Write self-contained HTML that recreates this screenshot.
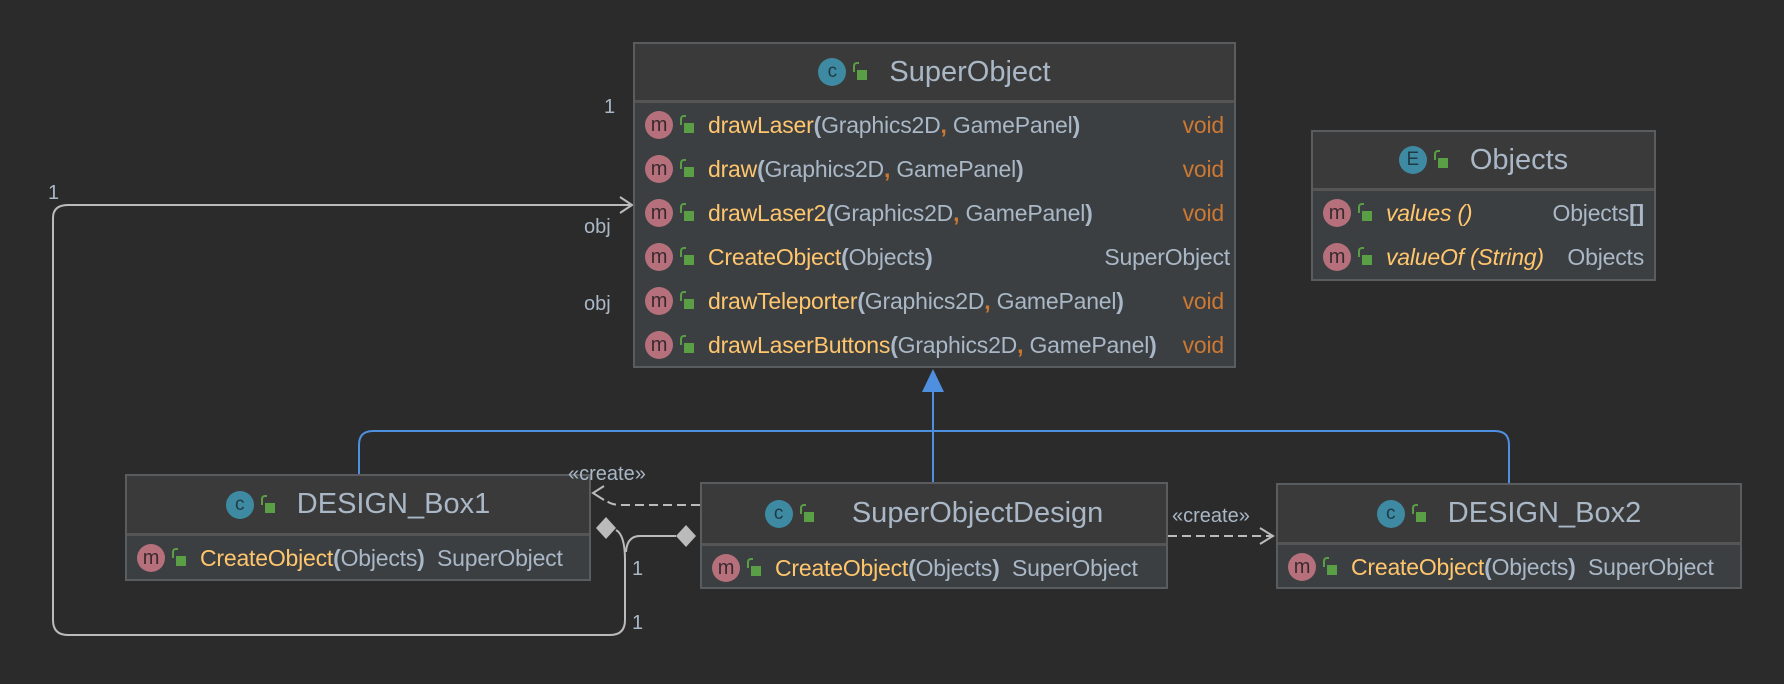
<!DOCTYPE html><html><head><meta charset="utf-8"><style>
*{margin:0;padding:0;box-sizing:border-box}
body{width:1784px;height:684px;background:#2b2b2b;position:relative;overflow:hidden;font-family:"Liberation Sans",sans-serif;color:#a9b7c6}
.box{position:absolute;border:2px solid #5a5d5f;background:#3c3f41}
.hd{background:#3a3a3a;border-bottom:3px solid #555;display:flex;align-items:center;justify-content:center;font-size:29px;color:#a9b7c6}
.row{display:flex;align-items:center;height:44px;font-size:23px;padding-left:10px;white-space:nowrap;letter-spacing:-0.2px}
.m{width:28px;height:28px;border-radius:50%;background:#b5707c;color:#3a2a2e;font-size:20px;display:inline-flex;align-items:center;justify-content:center;flex:none;line-height:1}
.c{width:28px;height:28px;border-radius:50%;background:#3f8aa3;color:#1f3a44;font-size:19px;display:inline-flex;align-items:center;justify-content:center;flex:none}
.lk{display:inline-block;width:10px;height:10px;background:#5a9e45;position:relative;margin:6px 14px 0 11px;flex:none}
.lk:before{content:"";position:absolute;left:-4px;top:-8px;width:4px;height:8px;border:2px solid #5a9e45;border-right:none;border-bottom:none;border-radius:4px 0 0 0}
.n{color:#ffc66d}.o{color:#cc7832;font-weight:bold}.b{font-weight:bold}.r{margin-left:auto;padding-right:10px}
.lb{position:absolute;font-size:20px;color:#a9b7c6}
</style></head><body>
<svg width="1784" height="684" style="position:absolute;left:0;top:0">
<g fill="none" stroke="#4f8fe0" stroke-width="2">
<path d="M359 474 V445 Q359 431 373 431 H1495 Q1509 431 1509 445 V483"/>
<path d="M933 482 V392"/>
</g>
<polygon points="933,369 922,392 944,392" fill="#4f8fe0"/>
<g fill="none" stroke="#bbbbbb" stroke-width="2">
<path d="M616 530 Q625 535 625 560 V620 Q625 635 610 635 H68 Q53 635 53 620 V218 Q53 205 68 205 H630"/>
<path d="M676 536 H640 Q627 536 626 552"/>
<path d="M620 197 L632 205 L620 213"/>
<path d="M700 505 H622 Q610 505 606 500" stroke-dasharray="9 5"/>
<path d="M604 486 L593 493 L604 500"/>
<path d="M1168 536 H1272" stroke-dasharray="9 5"/>
<path d="M1260 528 L1273 536 L1260 544"/>
</g>
<polygon points="606,517 616,528 606,539 596,528" fill="#bbbbbb"/>
<polygon points="686,525 696,536 686,547 676,536" fill="#bbbbbb"/>
</svg>

<div class="box" style="left:633px;top:42px;width:603px;height:326px">
<div class="hd" style="height:59px"><span class="c">c</span><span class="lk"></span>&nbsp;SuperObject</div>
<div class="row"><span class="m">m</span><span class="lk"></span><span class="n">drawLaser</span><span class="b">(</span>Graphics2D<span class="o">,</span>&nbsp;GamePanel<span class="b">)</span><span class="r o" style="font-weight:normal">void</span></div>
<div class="row"><span class="m">m</span><span class="lk"></span><span class="n">draw</span><span class="b">(</span>Graphics2D<span class="o">,</span>&nbsp;GamePanel<span class="b">)</span><span class="r o" style="font-weight:normal">void</span></div>
<div class="row"><span class="m">m</span><span class="lk"></span><span class="n">drawLaser2</span><span class="b">(</span>Graphics2D<span class="o">,</span>&nbsp;GamePanel<span class="b">)</span><span class="r o" style="font-weight:normal">void</span></div>
<div class="row"><span class="m">m</span><span class="lk"></span><span class="n">CreateObject</span><span class="b">(</span>Objects<span class="b">)</span><span class="r" style="padding-right:4px">SuperObject</span></div>
<div class="row"><span class="m">m</span><span class="lk"></span><span class="n">drawTeleporter</span><span class="b">(</span>Graphics2D<span class="o">,</span>&nbsp;GamePanel<span class="b">)</span><span class="r o" style="font-weight:normal">void</span></div>
<div class="row"><span class="m">m</span><span class="lk"></span><span class="n">drawLaserButtons</span><span class="b">(</span>Graphics2D<span class="o">,</span>&nbsp;GamePanel<span class="b">)</span><span class="r o" style="font-weight:normal">void</span></div>
</div>

<div class="box" style="left:1311px;top:130px;width:345px;height:151px">
<div class="hd" style="height:59px"><span class="c">E</span><span class="lk"></span>&nbsp;Objects</div>
<div class="row"><span class="m">m</span><span class="lk"></span><i class="n">values ()</i><span class="r">Objects<b>[]</b></span></div>
<div class="row"><span class="m">m</span><span class="lk"></span><i class="n">valueOf (String)</i><span class="r">Objects</span></div>
</div>

<div class="box" style="left:125px;top:474px;width:466px;height:107px">
<div class="hd" style="height:60px"><span class="c">c</span><span class="lk"></span>&nbsp;DESIGN_Box1</div>
<div class="row"><span class="m">m</span><span class="lk"></span><span class="n">CreateObject</span><span class="b">(</span>Objects<span class="b">)</span>&nbsp;&nbsp;SuperObject</div>
</div>

<div class="box" style="left:700px;top:482px;width:468px;height:107px">
<div class="hd" style="height:62px"><span class="c">c</span><span class="lk"></span>&nbsp;&nbsp;&nbsp;SuperObjectDesign</div>
<div class="row"><span class="m">m</span><span class="lk"></span><span class="n">CreateObject</span><span class="b">(</span>Objects<span class="b">)</span>&nbsp;&nbsp;SuperObject</div>
</div>

<div class="box" style="left:1276px;top:483px;width:466px;height:106px">
<div class="hd" style="height:60px"><span class="c">c</span><span class="lk"></span>&nbsp;DESIGN_Box2</div>
<div class="row"><span class="m">m</span><span class="lk"></span><span class="n">CreateObject</span><span class="b">(</span>Objects<span class="b">)</span>&nbsp;&nbsp;SuperObject</div>
</div>

<div class="lb" style="left:604px;top:96px">1</div>
<div class="lb" style="left:48px;top:182px">1</div>
<div class="lb" style="left:584px;top:216px">obj</div>
<div class="lb" style="left:584px;top:293px">obj</div>
<div class="lb" style="left:568px;top:463px">«create»</div>
<div class="lb" style="left:1172px;top:505px">«create»</div>
<div class="lb" style="left:632px;top:558px">1</div>
<div class="lb" style="left:632px;top:612px">1</div>
</body></html>
